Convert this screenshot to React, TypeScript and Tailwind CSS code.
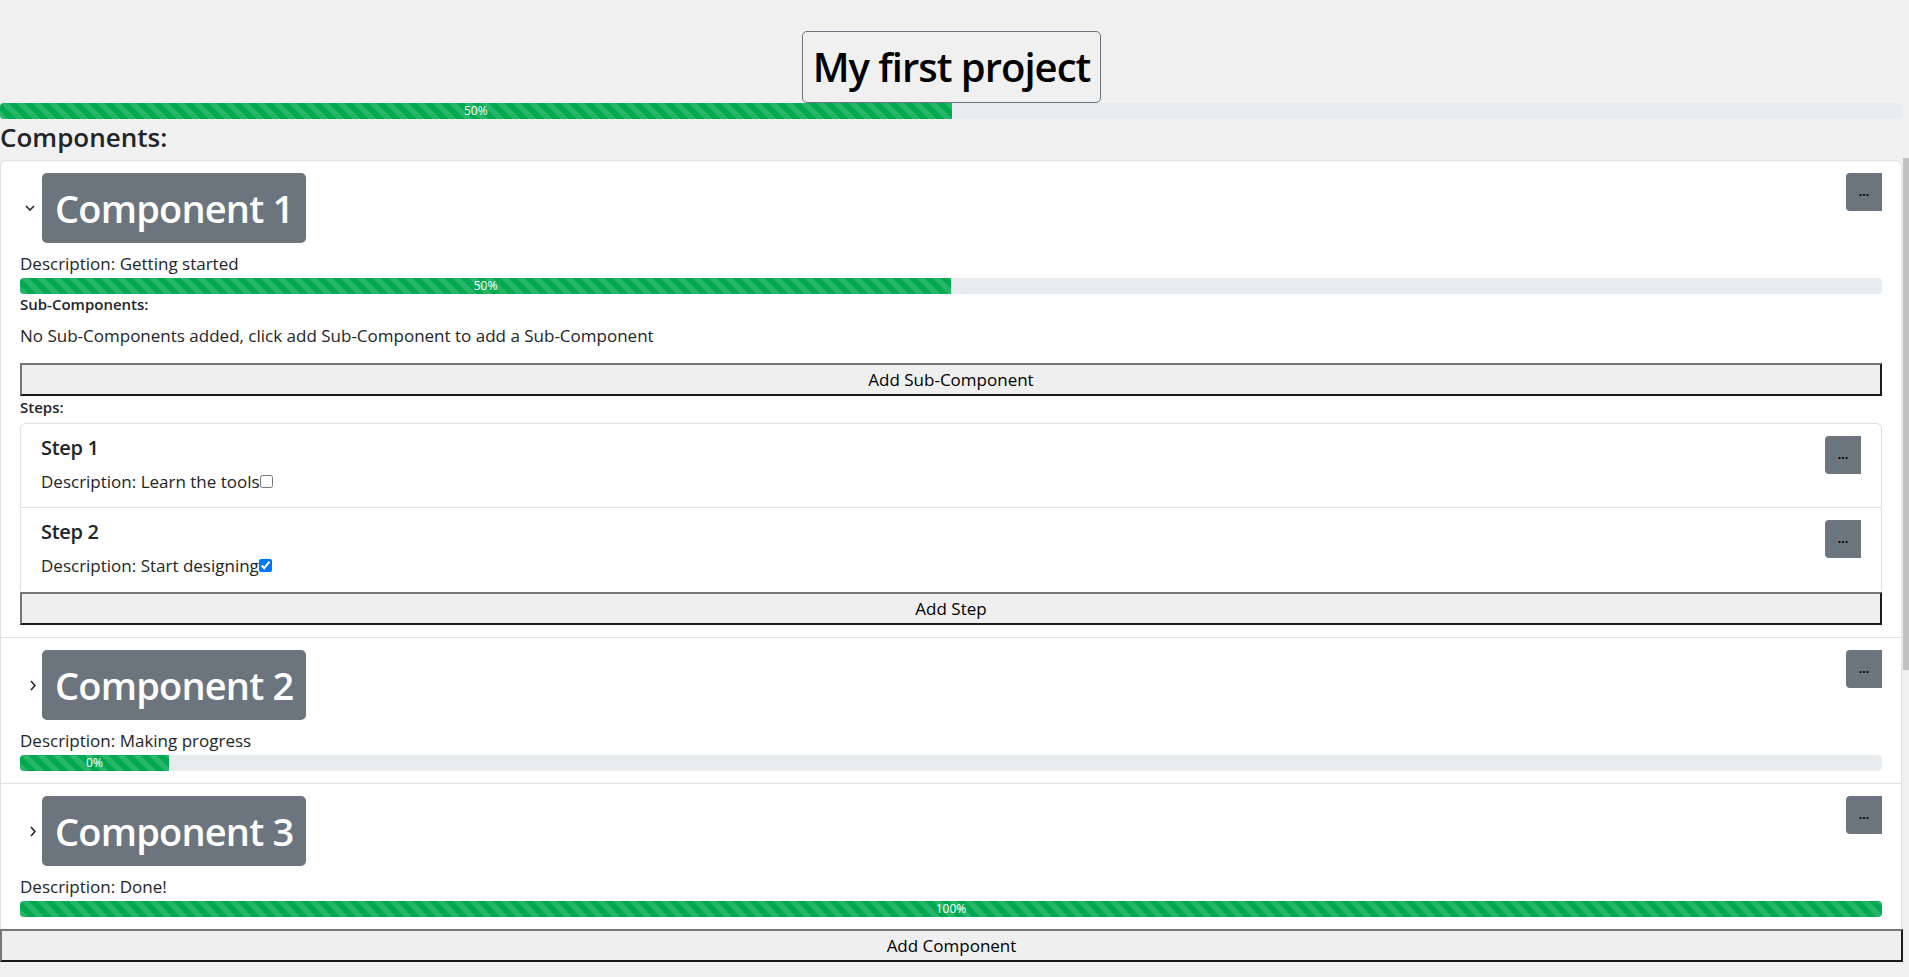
import React from "react";

interface Step {
  title: string;
  description: string;
  done: boolean;
}

interface Component {
  name: string;
  description: string;
  progress: number;
  label: string;
  open: boolean;
  steps: Step[];
}

const components: Component[] = [
  {
    name: "Component 1",
    description: "Getting started",
    progress: 50,
    label: "50%",
    open: true,
    steps: [
      { title: "Step 1", description: "Learn the tools", done: false },
      { title: "Step 2", description: "Start designing", done: true },
    ],
  },
  { name: "Component 2", description: "Making progress", progress: 8, label: "0%", open: false, steps: [] },
  { name: "Component 3", description: "Done!", progress: 100, label: "100%", open: false, steps: [] },
];

const ProgressBar: React.FC<{ value: number; label: string; className?: string }> = ({ value, label, className }) => (
  <div className={`flex h-4 overflow-hidden rounded-[4px] bg-[#e9ecef] ${className ?? ""}`}>
    <div
      className="flex h-full items-center justify-center bg-[#00a94f] bg-[linear-gradient(45deg,rgba(255,255,255,0.15)_25%,transparent_25%,transparent_50%,rgba(255,255,255,0.15)_50%,rgba(255,255,255,0.15)_75%,transparent_75%,transparent)] bg-[length:16px_16px] text-[12px] leading-none text-white"
      style={{ width: `${value}%` }}
    >
      {label}
    </div>
  </div>
);

const NativeButton: React.FC<{ children: React.ReactNode; className?: string }> = ({ children, className }) => (
  <button
    type="button"
    className={`flex h-[33px] items-center justify-center border-2 border-t-[#767676] border-l-[#767676] border-r-[#1a1a1a] border-b-[#1a1a1a] bg-[#efefef] text-[17px] text-black ${className ?? ""}`}
  >
    {children}
  </button>
);

const MoreButton: React.FC = () => (
  <button
    type="button"
    className="flex h-[38px] w-[36px] shrink-0 items-center justify-center rounded-l-[4px] bg-[#6c757d] text-[12px] font-bold leading-none text-black"
  >
    ...
  </button>
);

const Chevron: React.FC<{ open: boolean }> = ({ open }) => (
  <div className="flex w-[22px] shrink-0 items-center justify-center">
    {open ? (
      <svg width="10" height="6" viewBox="0 0 10 6" fill="none" stroke="#212529" strokeWidth="1.6" className="mr-[2px]">
        <polyline points="1,1 5,5 9,1" />
      </svg>
    ) : (
      <svg width="6" height="11" viewBox="0 0 6 11" fill="none" stroke="#212529" strokeWidth="1.6" className="ml-[4px]">
        <polyline points="1,1 5,5.5 1,10" />
      </svg>
    )}
  </div>
);

const ComponentCard: React.FC<{ item: Component; first: boolean }> = ({ item, first }) => (
  <div
    className={`border border-[#dfdfdf] bg-white px-[19px] pt-[12px] pb-[12px] ${first ? "rounded-t-[6px]" : "-mt-px"}`}
  >
    <div className="flex items-start justify-between">
      <div className="flex items-center">
        <Chevron open={item.open} />
        <h2 className="flex h-[70px] items-center rounded-[5px] bg-[#6c757d] px-[13px] text-[38px] font-semibold leading-none tracking-[-0.8px] text-white">
          {item.name}
        </h2>
      </div>
      <MoreButton />
    </div>
    <p className="mt-[9px] text-[17px] leading-[24px] text-[#212529]">Description: {item.description}</p>
    <ProgressBar value={item.progress} label={item.label} className="mt-[2px]" />
    {item.open && (
      <div>
        <h6 className="text-[15px] font-semibold leading-[21px] text-[#212529]">Sub-Components:</h6>
        <p className="mt-[9px] text-[17px] leading-[24px] text-[#212529]">
          No Sub-Components added, click add Sub-Component to add a Sub-Component
        </p>
        <NativeButton className="mt-[15px] w-full">Add Sub-Component</NativeButton>
        <h6 className="mt-px text-[15px] font-semibold leading-[21px] text-[#212529]">Steps:</h6>
        <ul className="mt-[5px] rounded-t-[6px] border border-b-0 border-[#dfdfdf]">
          {item.steps.map((step, i) => (
            <li
              key={step.title}
              className={`flex items-start justify-between px-[20px] pt-[12px] pb-[13px] ${i > 0 ? "border-t border-[#dfdfdf]" : ""}`}
            >
              <div>
                <h5 className="text-[20px] font-semibold leading-[24px] tracking-[-0.3px] text-[#212529]">{step.title}</h5>
                <p className="mt-[10px] text-[17px] leading-[24px] text-[#212529]">
                  Description: {step.description}
                  <input type="checkbox" readOnly checked={step.done} className="m-0 align-baseline" />
                </p>
              </div>
              <MoreButton />
            </li>
          ))}
        </ul>
        <NativeButton className="mt-px w-full">Add Step</NativeButton>
      </div>
    )}
  </div>
);

export default function App() {
  return (
    <div className="flex h-screen flex-col overflow-hidden bg-[#f0f0f0] font-['Open_Sans',sans-serif] text-[#212529]">
      <header className="mr-[6px] shrink-0">
        <div className="flex justify-center pt-[31px]">
          <h1 className="flex h-[72px] items-center rounded-[5px] border border-[#6c757d] px-[10px] text-[40px] font-semibold leading-none tracking-[-1px] text-black">
            My first project
          </h1>
        </div>
        <ProgressBar value={50} label="50%" />
        <h4 className="mt-[4px] mb-[6px] text-[26px] font-semibold leading-[29px] text-[#212529]">Components:</h4>
      </header>
      <main className="flex min-h-0 flex-1">
        <div className="min-w-0 flex-1 overflow-hidden pt-[2px]">
          <div className="mr-[1px]">
            {components.map((c, i) => (
              <ComponentCard key={c.name} item={c} first={i === 0} />
            ))}
          </div>
          <NativeButton className="-mt-px w-full">Add Component</NativeButton>
        </div>
        <div className="w-[6px] shrink-0 bg-[#f0f0f0]">
          <div className="h-[512px] bg-[#c1c1c1]" />
        </div>
      </main>
    </div>
  );
}
